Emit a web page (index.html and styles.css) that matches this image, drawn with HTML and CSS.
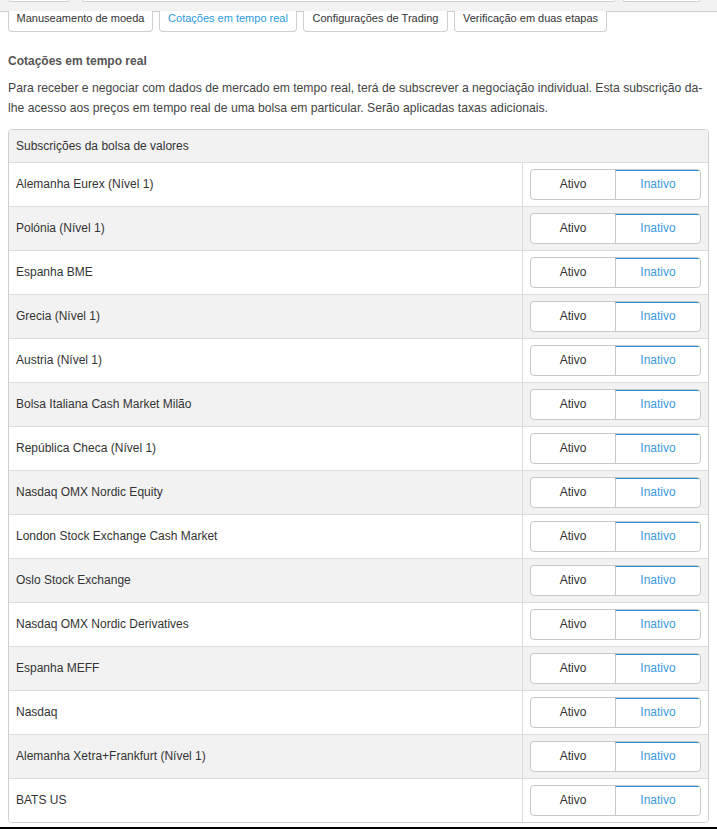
FILE: index.html
```html
<!DOCTYPE html>
<html lang="pt">
<head>
<meta charset="utf-8">
<title>Cotações em tempo real</title>
<link rel="stylesheet" href="styles.css">
</head>
<body>
<div class="topstrip">
  <div class="stub stub1"></div>
  <div class="stub stub2"></div>
  <div class="stub stub3"></div>
</div>
<nav class="tabs">
  <a class="tab t1">Manuseamento de moeda</a>
  <a class="tab t2 active">Cotações em tempo real</a>
  <a class="tab t3">Configurações de Trading</a>
  <a class="tab t4">Verificação em duas etapas</a>
</nav>
<main class="content">
  <h2 class="title">Cotações em tempo real</h2>
  <p class="intro">Para receber e negociar com dados de mercado em tempo real, terá de subscrever a negociação individual. Esta subscrição da-lhe acesso aos preços em tempo real de uma bolsa em particular. Serão aplicadas taxas adicionais.</p>
  <div class="panel">
    <div class="panel-head">Subscrições da bolsa de valores</div>
    <div class="row"><div class="name">Alemanha Eurex (Nível 1)</div><div class="act"><div class="toggle"><span class="opt">Ativo</span><span class="opt on">Inativo</span></div></div></div>
    <div class="row"><div class="name">Polónia (Nível 1)</div><div class="act"><div class="toggle"><span class="opt">Ativo</span><span class="opt on">Inativo</span></div></div></div>
    <div class="row"><div class="name">Espanha BME</div><div class="act"><div class="toggle"><span class="opt">Ativo</span><span class="opt on">Inativo</span></div></div></div>
    <div class="row"><div class="name">Grecia (Nível 1)</div><div class="act"><div class="toggle"><span class="opt">Ativo</span><span class="opt on">Inativo</span></div></div></div>
    <div class="row"><div class="name">Austria (Nível 1)</div><div class="act"><div class="toggle"><span class="opt">Ativo</span><span class="opt on">Inativo</span></div></div></div>
    <div class="row"><div class="name">Bolsa Italiana Cash Market Milão</div><div class="act"><div class="toggle"><span class="opt">Ativo</span><span class="opt on">Inativo</span></div></div></div>
    <div class="row"><div class="name">República Checa (Nível 1)</div><div class="act"><div class="toggle"><span class="opt">Ativo</span><span class="opt on">Inativo</span></div></div></div>
    <div class="row"><div class="name">Nasdaq OMX Nordic Equity</div><div class="act"><div class="toggle"><span class="opt">Ativo</span><span class="opt on">Inativo</span></div></div></div>
    <div class="row"><div class="name">London Stock Exchange Cash Market</div><div class="act"><div class="toggle"><span class="opt">Ativo</span><span class="opt on">Inativo</span></div></div></div>
    <div class="row"><div class="name">Oslo Stock Exchange</div><div class="act"><div class="toggle"><span class="opt">Ativo</span><span class="opt on">Inativo</span></div></div></div>
    <div class="row"><div class="name">Nasdaq OMX Nordic Derivatives</div><div class="act"><div class="toggle"><span class="opt">Ativo</span><span class="opt on">Inativo</span></div></div></div>
    <div class="row"><div class="name">Espanha MEFF</div><div class="act"><div class="toggle"><span class="opt">Ativo</span><span class="opt on">Inativo</span></div></div></div>
    <div class="row"><div class="name">Nasdaq</div><div class="act"><div class="toggle"><span class="opt">Ativo</span><span class="opt on">Inativo</span></div></div></div>
    <div class="row"><div class="name">Alemanha Xetra+Frankfurt (Nível 1)</div><div class="act"><div class="toggle"><span class="opt">Ativo</span><span class="opt on">Inativo</span></div></div></div>
    <div class="row"><div class="name">BATS US</div><div class="act"><div class="toggle"><span class="opt">Ativo</span><span class="opt on">Inativo</span></div></div></div>
  </div>
</main>
<div class="edge"></div>
</body>
</html>
```

FILE: styles.css
```css
* { box-sizing: border-box; }
html, body { margin: 0; padding: 0; background: #fff; }
body {
  font-family: "Liberation Sans", Arial, sans-serif;
  font-size: 12px;
  color: #333;
}
.topstrip {
  height: 12px;
  background: #f2f2f2;
  border-bottom: 1px solid #cfcfcf;
  display: flex;
  align-items: flex-start;
}
.stub {
  height: 2px;
  background: #fff;
  border: 1px solid #cfcfcf;
  border-top: 0;
  border-radius: 0 0 3px 3px;
}
.stub1 { margin-left: 9px; width: 60px; }
.stub2 { margin-left: 13px; width: 533px; }
.stub3 { margin-left: 8px; width: 77px; }
.tabs {
  display: flex;
  gap: 6px;
  padding: 0 8px;
  margin-top: -1px;
}
.tab {
  display: block;
  height: 21px;
  padding: 0;
  border: 1px solid #cfcfcf;
  border-top: 0;
  border-radius: 0 0 4px 4px;
  background: #fff;
  color: #333;
  font-size: 11px;
  line-height: 13px;
  padding-top: 1px;
  text-align: center;
}
.t1 { width: 145px; }
.t2 { width: 138px; }
.t3 { width: 145px; }
.t4 { width: 153px; }
.tab.active { color: #2b9ae0; }
.content { padding: 0 8px; }
.title {
  margin: 20px 0 0;
  font-size: 12px;
  line-height: 18px;
  font-weight: bold;
  color: #555;
}
.intro {
  margin: 8px 0 11px;
  font-size: 12.2px;
  line-height: 20px;
  color: #444;
}
.panel {
  border: 1px solid #cfcfcf;
  border-radius: 4px;
  overflow: hidden;
}
.panel-head {
  height: 33px;
  line-height: 32px;
  padding-left: 7px;
  background: #f2f2f2;
  border-bottom: 1px solid #ddd;
  color: #333;
}
.row {
  display: flex;
  height: 44px;
  border-bottom: 1px solid #ddd;
  background: #fff;
}
.row:nth-of-type(odd) { background: #f2f2f2; }
.row:last-child { border-bottom: 0; height: 43px; }
.name {
  flex: 1;
  padding-left: 7px;
  line-height: 43px;
}
.act {
  width: 186px;
  border-left: 1px solid #ddd;
  padding: 6px 0 0 7px;
}
.toggle {
  display: flex;
  width: 171px;
  height: 31px;
  border: 1px solid #c8c8c8;
  border-radius: 4px;
  background: #fff;
  overflow: hidden;
}
.opt {
  flex: 1;
  text-align: center;
  line-height: 29px;
  color: #333;
}
.opt.on {
  color: #3b9ae1;
  border-left: 1px solid #c8c8c8;
  border-top: 1px solid #2093d8;
  line-height: 27px;
}
.edge {
  margin-top: 4px;
  height: 2px;
  background: #000;
}
```
